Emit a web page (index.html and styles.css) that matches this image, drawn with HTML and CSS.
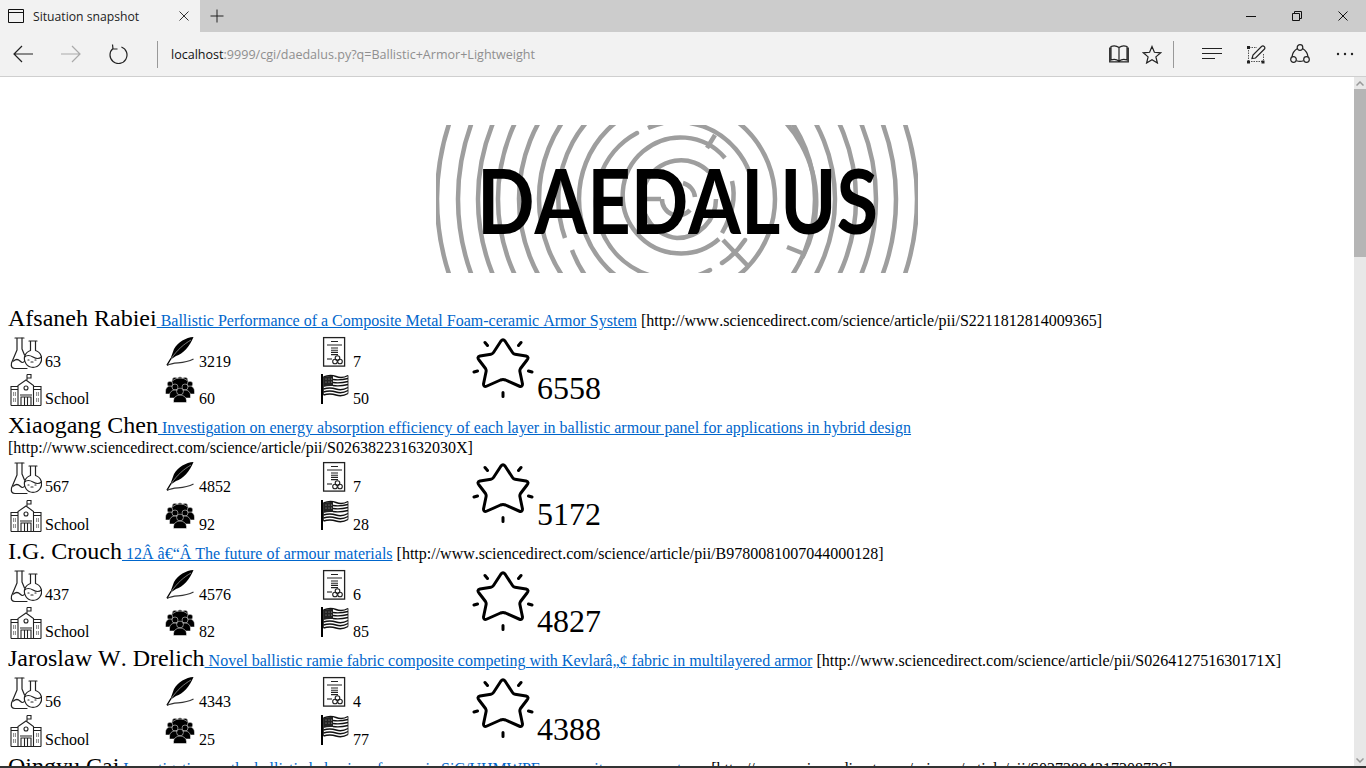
FILE: index.html
```html
<!DOCTYPE html>
<html lang="en">
<head>
<meta charset="utf-8">
<title>Situation snapshot</title>
<link rel="stylesheet" href="styles.css">
</head>
<body>
<svg class="defs" aria-hidden="true">
  <symbol id="flask" viewBox="0 0 34 36">
    <g fill="none" stroke="#222" stroke-width="1.2" stroke-linecap="round" stroke-linejoin="round">
      <path d="M7 4H16M9 4V16L3.5 29Q2.500 34.500 7 34.500H19"/>
      <path d="M14 4V15L16.500 21"/>
      <path d="M21 7H29M22.500 7V16.500A8.600 8.600 0 1 0 27.500 16.500V7"/>
      <path d="M5.500 27Q9 24 12 27T16.500 27"/>
      <path d="M16.500 23Q20 20 25 23T33.500 23"/>
      <path d="M23 28h2M27 26h1M20 26h1"/>
    </g>
  </symbol>
  <symbol id="school" viewBox="0 0 34 36">
    <g fill="none" stroke="#222" stroke-width="1.1">
      <path d="M19 9V3.500M19 3.500H23V7H19"/>
      <path d="M10 34V14.500L18 9L25.500 14.500V34"/>
      <path d="M3 34.500H33M3 34.500V15.500H10M25.500 15.500H33V34.500M3 18.500H10M25.500 18.500H33"/>
      <circle cx="18" cy="17" r="2"/>
      <path d="M13 34V26H23V34M16.500 26V34M19.500 26V34M12 24H24"/>
      <path d="M5 22h3M5 24h3M5 28h3M5 30h3M28 22h3M28 24h3M28 28h3M28 30h3" stroke-dasharray="1.200 .8"/>
    </g>
  </symbol>
  <symbol id="feather" viewBox="0 0 34 36">
    <path d="M28.500 3C21 3.500 13 8 9 15L5 26L11 22C18 20 25 12 28.500 3Z" fill="#000"/>
    <path d="M26 6C19 10 12 16 6 25" fill="none" stroke="#999" stroke-width=".8"/>
    <path d="M6 24.500L2 31" fill="none" stroke="#000" stroke-width="1.400"/>
    <path d="M2 31.500C10 27 17 31 28.500 25" fill="none" stroke="#333" stroke-width="1.300"/>
  </symbol>
  <symbol id="people" viewBox="0 0 34 36">
    <g fill="#000" stroke="#fff" stroke-width=".5" transform="translate(-1 0)">
      <circle cx="11" cy="9" r="2.800"/><circle cx="16" cy="8.500" r="2.800"/><circle cx="21" cy="9" r="2.800"/>
      <path d="M6 15a5 4 0 0 1 20 0v4H6Z"/>
      <circle cx="6" cy="13" r="2.800"/><circle cx="26" cy="13" r="2.800"/>
      <path d="M1.500 23v-3a4.500 5 0 0 1 9 0v3ZM21.500 23v-3a4.500 5 0 0 1 9 0v3Z"/>
      <circle cx="11" cy="16" r="3"/><circle cx="21" cy="16" r="3"/>
      <path d="M5.500 27v-3a5.500 5 0 0 1 11 0v3ZM15.500 27v-3a5.500 5 0 0 1 11 0v3Z"/>
      <circle cx="16" cy="20.500" r="3.400"/>
      <path d="M9.500 31.500v-2a6.500 5.500 0 0 1 13 0v2Z"/>
    </g>
  </symbol>
  <symbol id="cert" viewBox="0 0 34 36">
    <g fill="none" stroke="#222" stroke-width="1.100">
      <rect x="3.600" y="3.600" width="21" height="28.500" stroke-width="1.300"/>
      <path d="M11 7.500H18M7 11H22" stroke-width="1.200"/>
      <path d="M11 14H18M11 16.200H18M11 18.400H18M11 20.600H18"/>
      <path d="M7 25H12"/>
      <circle cx="17.500" cy="24" r="2.300"/><circle cx="15" cy="27.500" r="2.300"/><circle cx="20" cy="27.500" r="2.300"/>
    </g>
  </symbol>
  <symbol id="flag" viewBox="0 0 34 36">
    <path d="M2 3V33" stroke="#000" stroke-width="2" fill="none"/>
    <g fill="none" stroke="#111" stroke-width="1.400">
      <path d="M3.500 6Q10 3 16 5.500T28 4.500"/>
      <path d="M13 8.500Q20 9.500 28 7.500"/>
      <path d="M13 11.500Q20 12.500 28 10.500"/>
      <path d="M13 14.500Q20 15.500 28 13.500"/>
      <path d="M3.500 18Q10 16 16 18T28 16.500"/>
      <path d="M3.500 21Q10 19 16 21T28 19.500"/>
      <path d="M3.500 24Q10 22 16 24T28 22.500"/>
      <path d="M28 4.500V22.500M3.500 6V24" stroke-width=".8"/>
    </g>
    <path d="M3.500 6Q8 4.500 13 5V15Q8 14.500 3.500 16Z" fill="#222"/>
    <g fill="#aaa"><circle cx="6" cy="8" r=".6"/><circle cx="9" cy="8" r=".6"/><circle cx="11.500" cy="8" r=".6"/><circle cx="6" cy="11" r=".6"/><circle cx="9" cy="11" r=".6"/><circle cx="11.500" cy="11" r=".6"/></g>
  </symbol>
  <symbol id="star" viewBox="0 0 62 62">
    <g fill="none" stroke="#000" stroke-width="3" stroke-linecap="round" stroke-linejoin="round">
      <path d="M29 4Q31 1.500 33 4L40.500 15.500Q41.500 17 43 17.200L54 19Q57.500 20 55 23L48.500 31.500Q47.500 33 48 35L50.500 47Q50.500 50.500 47 49L33.500 43Q31 42 28.500 43L15 49Q11.500 50.500 11.500 47L14 35Q14.500 33 13.500 31.500L7 23Q4.500 20 8 19L19 17.200Q20.500 17 21.500 15.500Z"/>
      <path d="M13 5.500L15.500 8.500M49 5.500L46.500 8.500M2 35L5.500 34M60 35L56.500 34M31 55.500V59.500"/>
    </g>
  </symbol>
</svg>

<header class="tabbar">
  <div class="tab">
    <svg class="tabicon" width="16" height="14" viewBox="0 0 16 14"><path d="M.500.500H15.500V13.500H.500ZM.500 3.500H15.500" fill="none" stroke="#111"/></svg>
    <span class="tabtitle">Situation snapshot</span>
    <svg class="tabclose" width="10" height="10" viewBox="0 0 10 10"><path d="M.500.500L9.500 9.500M9.500.500L.500 9.500" stroke="#333" fill="none"/></svg>
  </div>
  <svg class="newtab" width="14" height="14" viewBox="0 0 14 14"><path d="M7 .500V13.500M.500 7H13.500" stroke="#222" fill="none"/></svg>
  <div class="wincontrols">
    <svg width="10" height="10" viewBox="0 0 10 10"><path d="M0 5.500H10" stroke="#111" fill="none"/></svg>
    <svg width="10" height="10" viewBox="0 0 10 10"><path d="M.500 2.500H7.500V9.500H.500ZM2.500 2.500V.500H9.500V7.500H7.500" stroke="#111" fill="none"/></svg>
    <svg width="10" height="10" viewBox="0 0 10 10"><path d="M.500.500L9.500 9.500M9.500.500L.500 9.500" stroke="#111" fill="none"/></svg>
  </div>
</header>

<nav class="toolbar">
  <svg class="tool" width="20" height="18" viewBox="0 0 20 18"><path d="M20 9H1M9 1L1 9L9 17" fill="none" stroke="#222" stroke-width="1.200"/></svg>
  <svg class="tool" width="20" height="18" viewBox="0 0 20 18"><path d="M0 9H19M11 1L19 9L11 17" fill="none" stroke="#aaa" stroke-width="1.200"/></svg>
  <svg class="tool" width="20" height="20" viewBox="0 0 20 20"><path d="M12.400 3A8.500 8.500 0 1 1 4 4.500M3.500 .5L4 5H8.500" fill="none" stroke="#222" stroke-width="1.200"/></svg>
  <span class="sep"></span>
  <div class="url"><span class="host">localhost</span>:9999/cgi/daedalus.py?q=Ballistic+Armor+Lightweight</div>
  <svg class="book" width="20" height="18" viewBox="0 0 20 18"><path d="M10 2.500C8 1 4.500 .5 2 1.500V15C4.500 14 8 14.500 10 16C12 14.500 15.500 14 18 15V1.500C15.500 .5 12 1 10 2.500ZM10 2.500V16M2 3H.700V16.800H19.300V3H18" fill="none" stroke="#222" stroke-width="1.200"/></svg>
  <svg class="fav" width="20" height="19" viewBox="0 0 20 19"><path d="M10 1.500L12.400 7.300L18.700 7.800L13.900 11.900L15.400 18L10 14.800L4.600 18L6.100 11.900L1.300 7.800L7.600 7.300Z" fill="none" stroke="#222" stroke-width="1.200"/></svg>
  <span class="sep sep2"></span>
  <svg class="hub" width="20" height="14" viewBox="0 0 20 14"><path d="M0 1.500H20M0 6.500H20M0 11.500H13" stroke="#222" stroke-width="1.200" fill="none"/></svg>
  <svg class="note" width="20" height="19" viewBox="0 0 20 19"><path d="M3 2.500H11M2.500 5V16M5 16.500H17M17.500 9V15" fill="none" stroke="#555" stroke-dasharray="1.500 1"/><path d="M1 1h3v3H1ZM1 15.500h3v3H1ZM15.500 15.500h3v3h-3ZM15.500 5" fill="#222"/><path d="M6 13.500L7 10L15.500 1.500Q17 .3 18.300 1.700T18 4.500L9.500 13Z" fill="none" stroke="#222" stroke-width="1.200"/></svg>
  <svg class="share" width="20" height="20" viewBox="0 0 20 20"><g fill="none" stroke="#222" stroke-width="1.200"><circle cx="10" cy="3.500" r="2.800"/><circle cx="3.500" cy="15.500" r="2.800"/><circle cx="16.500" cy="15.500" r="2.800"/><path d="M6.500 16.800Q10 18 13.500 16.800M7.500 4.500Q2.500 7.500 2 12.800M12.500 4.500Q17.500 7.500 18 12.800"/></g></svg>
  <svg class="more" width="18" height="4" viewBox="0 0 18 4"><g fill="#222"><circle cx="2" cy="2" r="1.200"/><circle cx="9" cy="2" r="1.200"/><circle cx="16" cy="2" r="1.200"/></g></svg>
</nav>

<div class="viewport">
  <main class="page">
    <div class="logo">
      <svg width="482" height="148" viewBox="436 125 482 148" role="img" aria-label="Daedalus logo">
        <g fill="none" stroke="#9e9e9e" stroke-width="4.500">
          <circle cx="677" cy="199" r="240"/><circle cx="677" cy="199" r="219"/><circle cx="677" cy="199" r="199"/>
          <circle cx="677" cy="199" r="179"/><circle cx="677" cy="199" r="158"/><circle cx="677" cy="199" r="138"/>
          <path d="M565 238A118 118 0 0 1 649 84"/>
          <path d="M705 84A118 118 0 0 1 802 258"/>
          <path d="M572 250A118 118 0 0 0 600 293"/>
          <circle cx="677" cy="199" r="98"/>
          <path d="M637 133A77 77 0 1 0 710 270" stroke-linecap="round"/>
          <path d="M648 128A77 77 0 0 1 663 123"/>
          <path d="M690 123A77 77 0 0 1 754 199"/>
          <path d="M722 263A79 79 0 0 0 745 240" stroke-linecap="round"/>
          <path d="M715 135L707 148M723 240L747 265M787 247L802 253"/>
          <path d="M725 158A58 58 0 1 0 719 239"/>
          <path d="M709 172A39 39 0 1 0 677 238A39 39 0 0 0 716 199"/>
          <path d="M732 181Q738 205 722 233"/>
          <path d="M643 199H661M662 199A16 16 0 0 0 690 210M683 183A16 16 0 0 1 695 197M645 215L650 223"/>
        </g>
        <text class="logotext" x="477" y="234" textLength="401" lengthAdjust="spacingAndGlyphs">DAEDALUS</text>
      </svg>
    </div>

    <section class="author">
      <div class="headline"><span class="name">Afsaneh Rabiei</span><a href="#"> Ballistic Performance of a Composite Metal Foam-ceramic Armor System</a> [http://www.sciencedirect.com/science/article/pii/S2211812814009365]</div>
      <div class="stats">
        <div class="stat c1"><svg class="icon"><use href="#flask"/></svg>63</div>
        <div class="stat c2"><svg class="icon"><use href="#feather"/></svg>3219</div>
        <div class="stat c3"><svg class="icon"><use href="#cert"/></svg>7</div>
        <div class="score"><svg class="star"><use href="#star"/></svg>6558</div>
        <div class="stat c1"><svg class="icon"><use href="#school"/></svg>School</div>
        <div class="stat c2"><svg class="icon"><use href="#people"/></svg>60</div>
        <div class="stat c3"><svg class="icon"><use href="#flag"/></svg>50</div>
      </div>
    </section>

    <section class="author">
      <div class="headline"><span class="name">Xiaogang Chen</span><a href="#"> Investigation on energy absorption efficiency of each layer in ballistic armour panel for applications in hybrid design</a> [http://www.sciencedirect.com/science/article/pii/S026382231632030X]</div>
      <div class="stats">
        <div class="stat c1"><svg class="icon"><use href="#flask"/></svg>567</div>
        <div class="stat c2"><svg class="icon"><use href="#feather"/></svg>4852</div>
        <div class="stat c3"><svg class="icon"><use href="#cert"/></svg>7</div>
        <div class="score"><svg class="star"><use href="#star"/></svg>5172</div>
        <div class="stat c1"><svg class="icon"><use href="#school"/></svg>School</div>
        <div class="stat c2"><svg class="icon"><use href="#people"/></svg>92</div>
        <div class="stat c3"><svg class="icon"><use href="#flag"/></svg>28</div>
      </div>
    </section>

    <section class="author">
      <div class="headline"><span class="name">I.G. Crouch</span><a href="#"> 12Â â€“Â The future of armour materials</a> [http://www.sciencedirect.com/science/article/pii/B9780081007044000128]</div>
      <div class="stats">
        <div class="stat c1"><svg class="icon"><use href="#flask"/></svg>437</div>
        <div class="stat c2"><svg class="icon"><use href="#feather"/></svg>4576</div>
        <div class="stat c3"><svg class="icon"><use href="#cert"/></svg>6</div>
        <div class="score"><svg class="star"><use href="#star"/></svg>4827</div>
        <div class="stat c1"><svg class="icon"><use href="#school"/></svg>School</div>
        <div class="stat c2"><svg class="icon"><use href="#people"/></svg>82</div>
        <div class="stat c3"><svg class="icon"><use href="#flag"/></svg>85</div>
      </div>
    </section>

    <section class="author">
      <div class="headline"><span class="name">Jaroslaw W. Drelich</span><a href="#"> Novel ballistic ramie fabric composite competing with Kevlarâ„¢ fabric in multilayered armor</a> [http://www.sciencedirect.com/science/article/pii/S026412751630171X]</div>
      <div class="stats">
        <div class="stat c1"><svg class="icon"><use href="#flask"/></svg>56</div>
        <div class="stat c2"><svg class="icon"><use href="#feather"/></svg>4343</div>
        <div class="stat c3"><svg class="icon"><use href="#cert"/></svg>4</div>
        <div class="score"><svg class="star"><use href="#star"/></svg>4388</div>
        <div class="stat c1"><svg class="icon"><use href="#school"/></svg>School</div>
        <div class="stat c2"><svg class="icon"><use href="#people"/></svg>25</div>
        <div class="stat c3"><svg class="icon"><use href="#flag"/></svg>77</div>
      </div>
    </section>

    <section class="author">
      <div class="headline"><span class="name">Qingyu Cai</span><a href="#"> Investigation on the ballistic behavior of ceramic SiC/UHMWPE composite armor systems</a> [http://www.sciencedirect.com/science/article/pii/S0272884217308736]</div>
    </section>
  </main>
  <aside class="scrollbar">
    <div class="arrow"><svg width="8" height="5" viewBox="0 0 8 5"><path d="M.500 4.500L4 1L7.500 4.500" fill="none" stroke="#999" stroke-width="1.500"/></svg></div>
    <div class="thumb"></div>
    <div class="track"></div>
    <div class="arrow"><svg width="8" height="5" viewBox="0 0 8 5"><path d="M.500.500L4 4L7.500.500" fill="none" stroke="#999" stroke-width="1.500"/></svg></div>
  </aside>
</div>
<div class="taskedge"></div>
</body>
</html>
```

FILE: styles.css
```css
* { box-sizing: border-box; }
html, body { margin: 0; height: 100%; overflow: hidden; }
body {
  display: flex;
  flex-direction: column;
  height: 768px;
  background: #fff;
  font-family: "Open Sans", "Noto Sans", sans-serif;
  color: #000;
}
.defs { position: absolute; width: 0; height: 0; }

.tabbar {
  display: flex;
  align-items: center;
  height: 32px;
  flex: none;
  background: #cccccc;
}
.tab {
  display: flex;
  align-items: center;
  width: 200px;
  height: 32px;
  padding-left: 8px;
  background: #f2f2f2;
}
.tabicon { flex: none; }
.tabtitle { margin-left: 9px; font-size: 12.2px; color: #222; flex: 1; }
.tabclose { flex: none; margin-right: 11px; }
.newtab { margin-left: 10px; }
.wincontrols {
  display: flex;
  gap: 36px;
  margin-left: auto;
  padding-right: 18px;
}

.toolbar {
  display: flex;
  align-items: center;
  flex: none;
  height: 45px;
  padding: 0 12px 0 13px;
  background: #f2f2f2;
  border-bottom: 1px solid #cfcfcf;
}
.tool { margin-right: 28px; flex: none; }
.sep { width: 1px; height: 27px; background: #999; flex: none; }
.url {
  margin-left: 13px;
  font-size: 12.55px;
  color: #8f8f8f;
  white-space: nowrap;
}
.host { color: #111; }
.book { margin-left: auto; }
.fav { margin-left: 13px; }
.sep2 { margin-left: 11px; }
.hub { margin-left: 28px; }
.note { margin-left: 24px; }
.share { margin-left: 24px; }
.more { margin-left: 26px; }

.viewport {
  display: flex;
  flex: 1;
  min-height: 0;
}
.page {
  flex: 1;
  min-width: 0;
  overflow: hidden;
  padding: 0 8px;
  font-family: "Liberation Serif", "Times New Roman", serif;
  font-size: 16px;
  font-kerning: none;
}
.logo {
  display: flex;
  justify-content: center;
  padding: 48px 0 32px;
}
.logo svg { display: block; }
.logotext {
  font-family: Lato, "Liberation Sans", sans-serif;
  font-weight: 700;
  font-size: 90px;
  fill: #000;
}

.author { padding-bottom: 5.2px; }
.headline a { color: #0066cc; }
.name { font-size: 24px; }
.stats {
  display: grid;
  grid-template-columns: 157px 155px 152px 1fr;
  grid-auto-rows: 37.4px;
  margin-top: .5px;
}
.stat {
  display: flex;
  align-items: flex-end;
  line-height: 16px;
}
.icon { width: 34px; height: 36px; flex: none; }
.c1 .icon { margin-right: 3px; }
.c3 .icon { margin-right: -1px; }
.score {
  grid-column: 4;
  grid-row: 1 / span 2;
  display: flex;
  align-items: flex-end;
  font-size: 32px;
  line-height: 37px;
}
.star { width: 62px; height: 62px; flex: none; margin: 0 3px 8.5px 0; }

.scrollbar {
  display: flex;
  flex-direction: column;
  flex: none;
  width: 12px;
  background: #e8e8e8;
}
.arrow {
  display: flex;
  align-items: center;
  justify-content: center;
  height: 12px;
  flex: none;
}
.thumb { height: 168px; flex: none; background: #b5b5b5; }
.track { flex: 1; }
.taskedge { height: 2px; flex: none; background: #333; }
```
